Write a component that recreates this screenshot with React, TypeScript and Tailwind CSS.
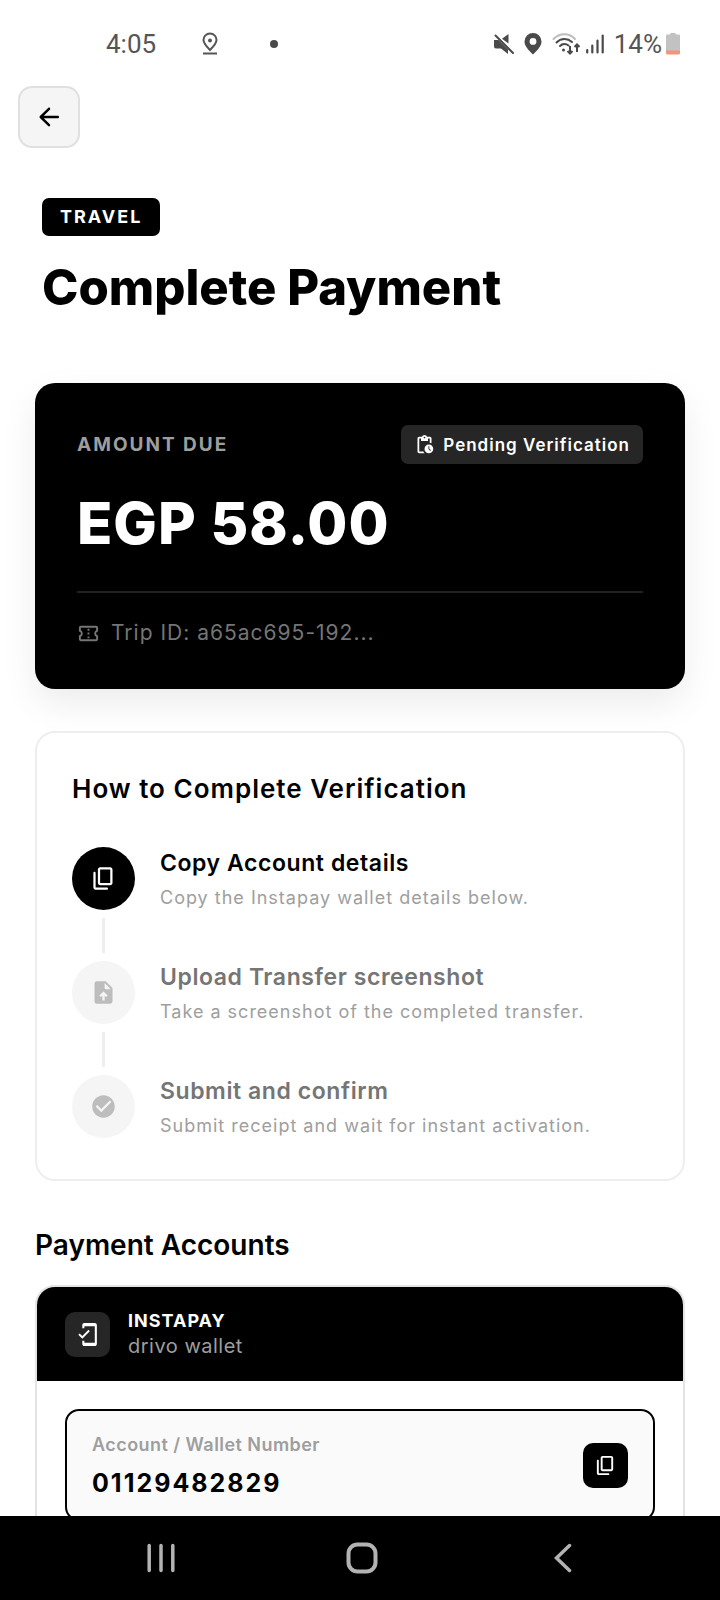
import type { ReactNode } from "react"
import {
  MdCheckCircle,
  MdMobileFriendly,
  MdOutlineConfirmationNumber,
  MdPendingActions,
} from "react-icons/md"

interface Step {
  title: string
  text: string
  icon: ReactNode
  active?: boolean
}

function CopyIcon({ className }: { className: string }) {
  return (
    <svg viewBox="0 0 24 24" fill="currentColor" className={className} aria-hidden="true">
      <path d="M15 20H5V7c0-.55-.45-1-1-1s-1 .45-1 1v13c0 1.1.9 2 2 2h10c.55 0 1-.45 1-1s-.45-1-1-1zm5-4V4c0-1.1-.9-2-2-2H9c-1.1 0-2 .9-2 2v12c0 1.1.9 2 2 2h9c1.1 0 2-.9 2-2zm-2 0H9V4h9v12z" />
    </svg>
  )
}

function UploadIcon({ className }: { className: string }) {
  return (
    <svg viewBox="0 0 24 24" fill="currentColor" className={className} aria-hidden="true">
      <path
        fillRule="evenodd"
        d="M14 2H6c-1.1 0-2 .9-2 2v16c0 1.1.9 2 2 2h12c1.1 0 2-.9 2-2V8l-6-6zm-1 1.500L18.500 9H14c-.55 0-1-.45-1-1V3.500zM8.300 14.700L12 11l3.700 3.700-1.400 1.400-1.300-1.300V19h-2v-4.200l-1.300 1.300-1.400-1.400z"
      />
    </svg>
  )
}

const steps: Step[] = [
  {
    title: "Copy Account details",
    text: "Copy the Instapay wallet details below.",
    icon: <CopyIcon className="size-[27px]" />,
    active: true,
  },
  {
    title: "Upload Transfer screenshot",
    text: "Take a screenshot of the completed transfer.",
    icon: <UploadIcon className="size-[27px]" />,
  },
  {
    title: "Submit and confirm",
    text: "Submit receipt and wait for instant activation.",
    icon: <MdCheckCircle className="size-[27px]" />,
  },
]

function StatusBar() {
  return (
    <div className="flex h-[86px] shrink-0 items-center justify-between pt-[2px] pr-10 pl-[106px] font-[Roboto,sans-serif] text-[26px] leading-8 text-[#555555]">
      <div className="flex items-center">
        <span>4:05</span>
        <svg viewBox="0 0 18 24" className="ml-[45px] h-6 w-[18px]" fill="none" stroke="currentColor" strokeWidth="2" aria-hidden="true">
          <path d="M9 18C5 14 2.500 11 2.500 8a6.500 6.500 0 0 1 13 0c0 3-2.500 6-6.500 10z" />
          <circle cx="9" cy="8.500" r="2" fill="currentColor" stroke="none" />
          <path d="M2 21.500h14" />
        </svg>
        <span className="ml-[51px] size-2 rounded-full bg-[#4a4a4a]" />
      </div>
      <div className="flex items-center">
        <svg viewBox="0 0 20 20" className="size-5 text-[#4a4a4a]" fill="currentColor" aria-hidden="true">
          <path d="M0 6h4.500L14 15.500V20l-7-5.500H2a2 2 0 0 1-2-2zM14.500 0v9.500L8 4.800z" />
          <path d="M1.500 1.500l17.500 17.500" stroke="currentColor" strokeWidth="2" strokeLinecap="round" />
        </svg>
        <svg viewBox="0 0 18 22" className="ml-[10px] h-[22px] w-[18px] text-[#4a4a4a]" fill="currentColor" aria-hidden="true">
          <path fillRule="evenodd" d="M9 0a8.500 8.500 0 0 0-8.500 8.500C.5 13 4 16.500 9 21.500c5-5 8.500-8.500 8.500-13A8.500 8.500 0 0 0 9 0zm0 5a3.400 3.400 0 1 1 0 6.800A3.400 3.400 0 0 1 9 5z" />
        </svg>
        <svg viewBox="0 0 28 22" className="ml-[10px] h-[22px] w-7 text-[#4a4a4a]" fill="none" stroke="currentColor" strokeWidth="2" strokeLinecap="round" aria-hidden="true">
          <path d="M1.500 6c6-6.500 16-6.500 21.500 0" stroke="#bdbdbd" />
          <path d="M4.500 9.500c4.500-4.500 11-4.500 15.500-.5" />
          <path d="M8 13c2.500-2.500 6-2.500 8.500-.5" />
          <circle cx="11.500" cy="17" r="1.500" fill="currentColor" stroke="none" />
          <path d="M18 13v7M15.500 18l2.500 2.500 2.500-2.500M25 19v-7M22.500 14l2.500-2.500 2.500 2.500" strokeLinecap="butt" />
        </svg>
        <svg viewBox="0 0 18 20" className="ml-[6px] h-5 w-[18px] text-[#4a4a4a]" stroke="currentColor" strokeWidth="2.200" strokeLinecap="round" aria-hidden="true">
          <path d="M1.200 16v2.500M6.300 11.500v7M11.500 6.500v12M16.700 1.500v17" />
        </svg>
        <span className="ml-[10px]">14%</span>
        <svg viewBox="0 0 14 22" className="ml-1 h-[22px] w-[14px]" aria-hidden="true">
          <path d="M5 0h4q1 0 1 1.500h3q1 0 1 1V18H0V2.500q0-1 1-1h3Q4 0 5 0z" fill="#c2c2c2" />
          <path d="M0 17.500h14V20q0 1.500-1.500 1.500h-11Q0 21.500 0 20z" fill="#f0947c" />
        </svg>
      </div>
    </div>
  )
}

function AmountCard() {
  return (
    <section className="rounded-[20px] bg-black px-[42px] pt-[42px] pb-[42px] text-white shadow-[0_14px_35px_rgba(0,0,0,0.08)]">
      <div className="flex items-center justify-between">
        <h2 className="text-[19px] leading-6 font-bold tracking-[2px] text-[#9e9e9e]">AMOUNT DUE</h2>
        <span className="flex h-[39px] items-center gap-2 rounded-[7px] bg-[#262626] px-[13px] text-[17px] leading-6 font-semibold tracking-[1px]">
          <MdPendingActions className="size-[21px]" />
          Pending Verification
        </span>
      </div>
      <p className="mt-[23px] text-[58px] leading-[72px] font-extrabold tracking-[1px]">EGP 58.00</p>
      <div className="mt-8 h-[2px] bg-[#212121]" />
      <p className="mt-[26px] flex items-center gap-[11px] text-[21px] leading-7 tracking-[1px] text-[#757575]">
        <MdOutlineConfirmationNumber className="size-[23px]" />
        Trip ID: a65ac695-192...
      </p>
    </section>
  )
}

function StepRow({ step, last }: { step: Step; last: boolean }) {
  return (
    <li className="flex gap-[25px]">
      <div className="flex flex-col items-center">
        <span
          className={`flex size-[63px] items-center justify-center rounded-full ${
            step.active ? "bg-black text-white" : "bg-[#f5f5f5] text-[#bdbdbd]"
          }`}
        >
          {step.icon}
        </span>
        {!last && <span className="my-2 h-[35px] w-[3px] bg-[#eeeeee]" />}
      </div>
      <div>
        <h3 className={`text-[23px] leading-8 font-semibold tracking-wide ${step.active ? "text-black" : "text-[#757575]"}`}>
          {step.title}
        </h3>
        <p className="mt-[3px] text-[18px] leading-8 tracking-[1px] text-[#9e9e9e]">{step.text}</p>
      </div>
    </li>
  )
}

function PaymentAccount() {
  return (
    <section className="overflow-hidden rounded-[20px] border-2 border-[#e4e4e4] bg-white">
      <header className="flex h-[94px] items-center gap-[18px] bg-black px-7">
        <span className="flex size-[45px] items-center justify-center rounded-[10px] bg-[#262626] text-white">
          <MdMobileFriendly className="size-[25px]" />
        </span>
        <div>
          <h3 className="text-[18px] leading-6 font-bold tracking-[1px] text-white">INSTAPAY</h3>
          <p className="text-[20px] leading-[26px] tracking-wide text-[#9e9e9e]">drivo wallet</p>
        </div>
      </header>
      <div className="p-7">
        <div className="flex items-center justify-between rounded-[14px] border-2 border-black bg-[#fafafa] px-[25px] py-[18px]">
          <dl>
            <dt className="text-[18px] leading-8 font-semibold tracking-wide text-[#9e9e9e]">Account / Wallet Number</dt>
            <dd className="mt-1 text-[25px] leading-9 font-bold tracking-[2px] text-black">01129482829</dd>
          </dl>
          <button type="button" aria-label="Copy account number" className="flex size-[45px] items-center justify-center rounded-[10px] bg-black text-white">
            <CopyIcon className="size-[23px]" />
          </button>
        </div>
      </div>
    </section>
  )
}

function NavBar() {
  return (
    <nav className="flex h-[84px] shrink-0 items-center justify-between bg-black pr-[137px] pl-[141px] text-[#b3b3b3]">
      <button type="button" aria-label="Recent apps" className="flex size-10 items-center justify-center">
        <svg viewBox="0 0 28 30" className="h-[30px] w-7" stroke="currentColor" strokeWidth="3.500" strokeLinecap="round">
          <path d="M2.200 2.500v25M14 2.500v25M25.800 2.500v25" />
        </svg>
      </button>
      <button type="button" aria-label="Home" className="flex size-10 items-center justify-center">
        <svg viewBox="0 0 32 32" className="size-8" fill="none" stroke="currentColor" strokeWidth="4">
          <rect x="2.500" y="2.500" width="27" height="27" rx="9" />
        </svg>
      </button>
      <button type="button" aria-label="Back" className="flex size-10 items-center justify-center">
        <svg viewBox="0 0 18 30" className="h-[30px] w-[18px]" fill="none" stroke="currentColor" strokeWidth="3.500" strokeLinecap="round">
          <path d="M15.500 2.500L2.500 15l13 12.500" />
        </svg>
      </button>
    </nav>
  )
}

export default function App() {
  return (
    <div className="flex h-screen flex-col bg-white font-[Inter,sans-serif] text-black">
      <StatusBar />
      <main className="min-h-0 flex-1 overflow-hidden">
        <div className="px-[18px]">
          <button
            type="button"
            aria-label="Go back"
            className="flex size-[62px] items-center justify-center rounded-[14px] border-2 border-[#e0e0e0] bg-[#f5f5f5]"
          >
            <svg viewBox="0 0 24 24" className="size-[30px]" fill="currentColor">
              <path d="M19 11H7.830l4.880-4.880c.39-.39.39-1.030 0-1.420-.39-.39-1.020-.39-1.410 0l-6.590 6.590c-.39.39-.39 1.020 0 1.410l6.590 6.590c.39.39 1.020.39 1.410 0 .39-.39.39-1.020 0-1.410L7.830 13H19c.55 0 1-.45 1-1s-.45-1-1-1z" />
            </svg>
          </button>
        </div>
        <div className="mt-[50px] px-[42px]">
          <span className="inline-flex h-[38px] items-center rounded-[7px] bg-black px-[18px] text-[18px] leading-6 font-bold tracking-[2px] text-white">
            TRAVEL
          </span>
          <h1 className="mt-[22px] text-[49px] leading-[60px] font-extrabold">Complete Payment</h1>
        </div>
        <div className="mt-[65px] px-[35px]">
          <AmountCard />
          <section className="mt-[42px] rounded-[20px] border-2 border-[#eeeeee] bg-white px-[35px] pt-[36px] pb-[37px]">
            <h2 className="text-[26px] leading-10 font-semibold tracking-[1px]">How to Complete Verification</h2>
            <ol className="mt-[38px]">
              {steps.map((step, i) => (
                <StepRow key={step.title} step={step} last={i === steps.length - 1} />
              ))}
            </ol>
          </section>
          <h2 className="mt-11 mb-5 text-[28px] leading-10 font-semibold">Payment Accounts</h2>
          <PaymentAccount />
        </div>
      </main>
      <NavBar />
    </div>
  )
}
